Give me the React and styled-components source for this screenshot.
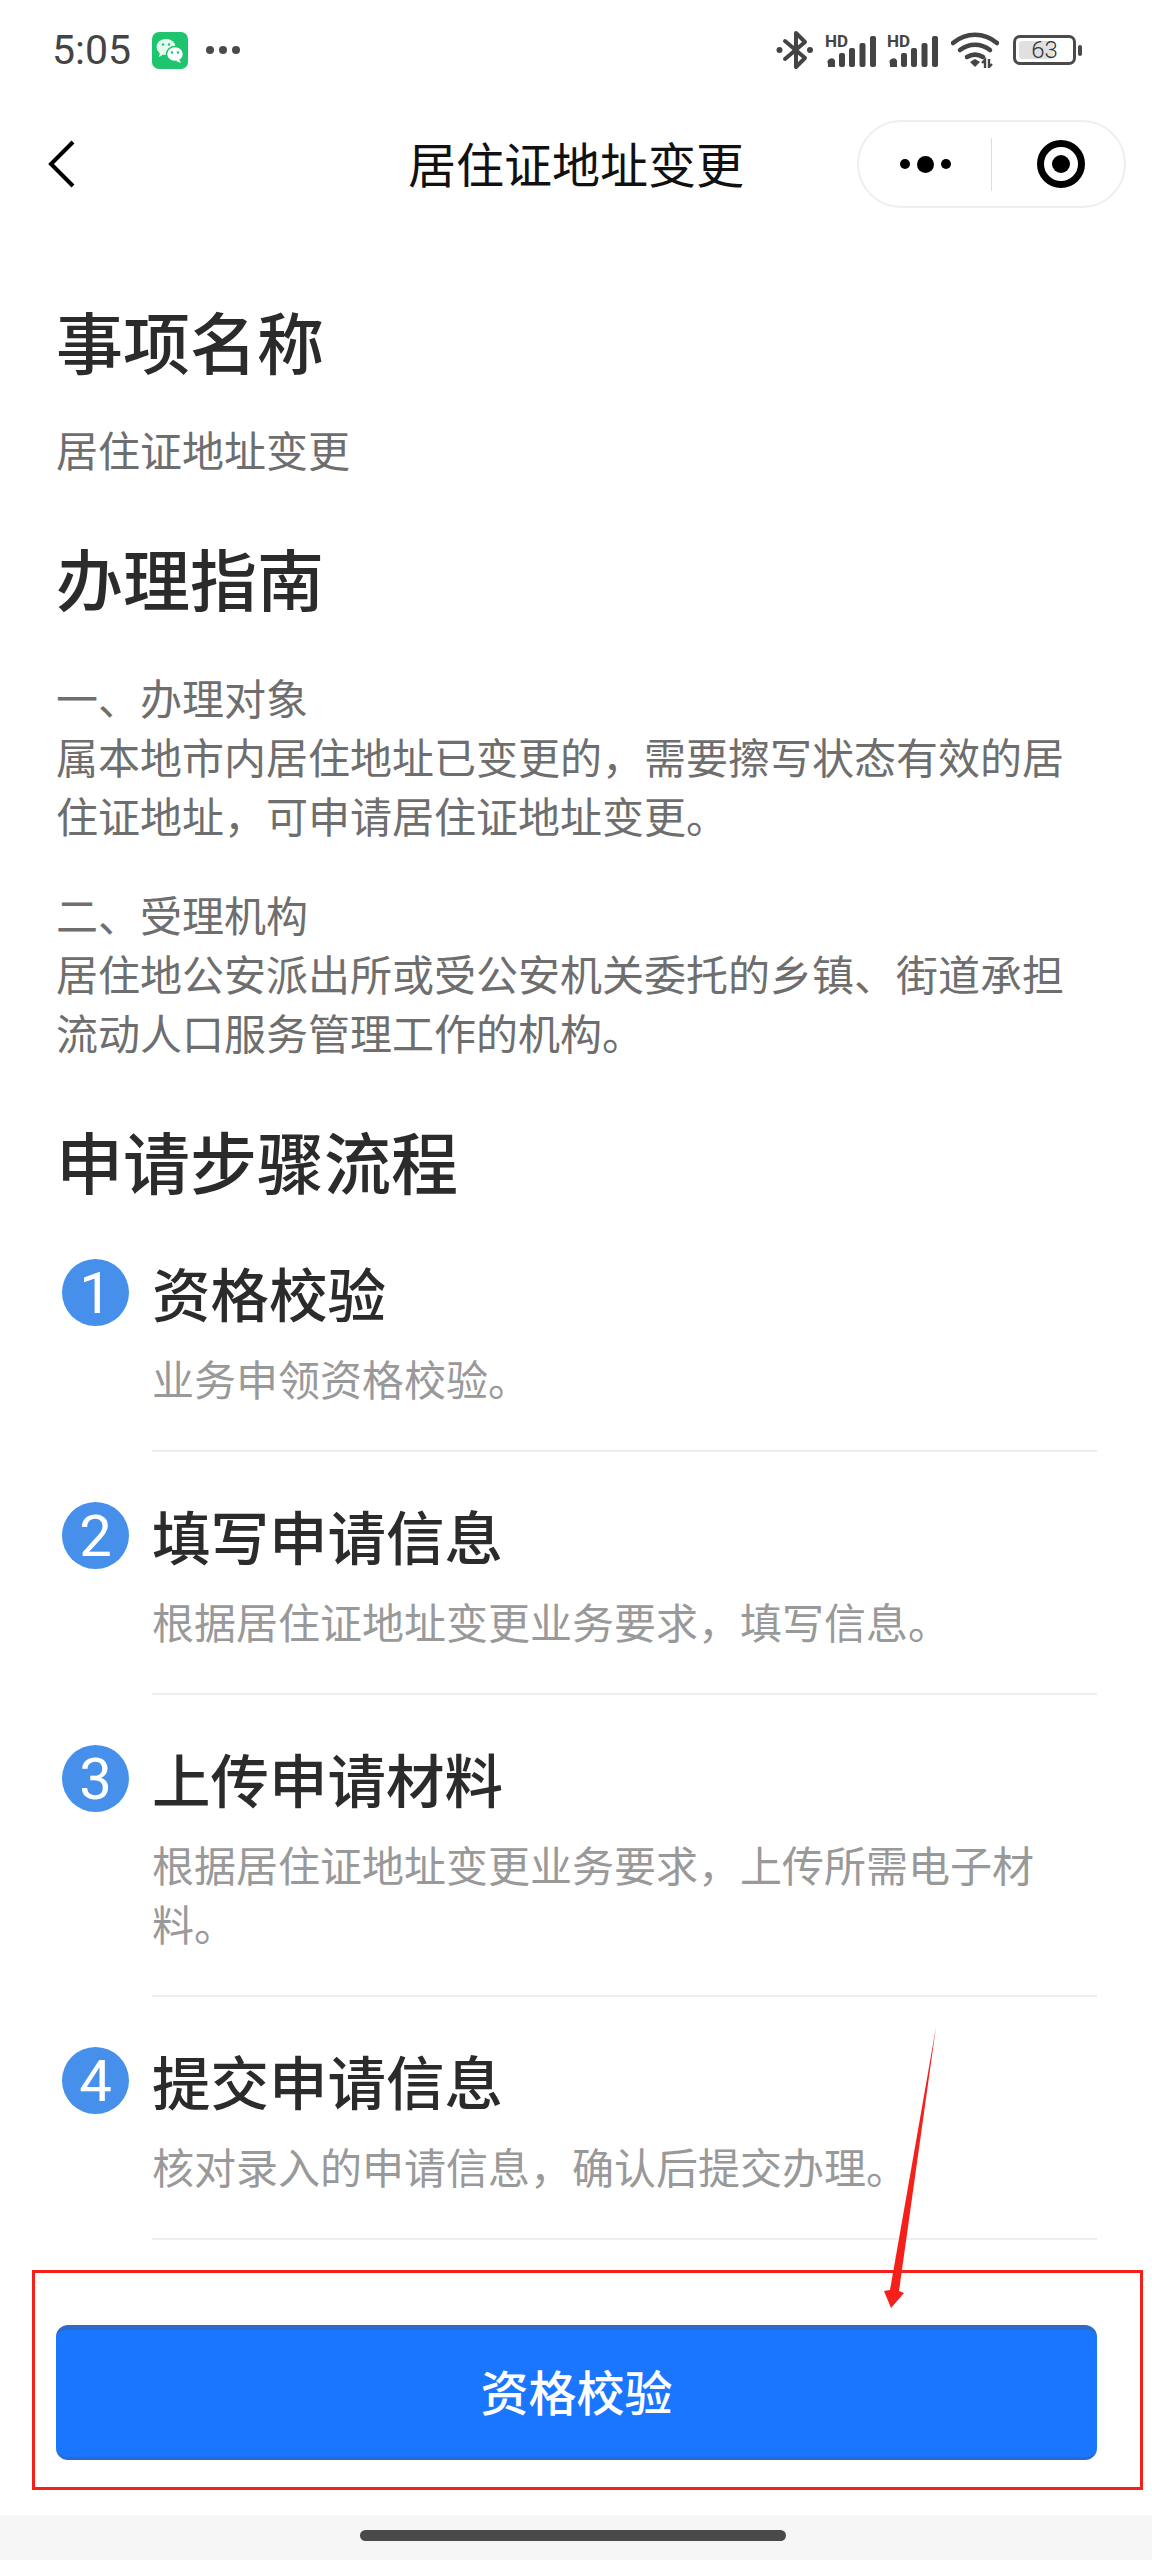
import styled, { createGlobalStyle } from 'styled-components'

const GlobalStyle = createGlobalStyle`
  html, body {
    margin: 0;
    padding: 0;
    background: #fff;
  }
  body {
    font-family: 'Noto Sans CJK SC', 'Noto Sans', sans-serif;
  }
`

const steps = [
  { title: '资格校验', desc: '业务申领资格校验。' },
  { title: '填写申请信息', desc: '根据居住证地址变更业务要求\uFF0C填写信息。' },
  { title: '上传申请材料', desc: '根据居住证地址变更业务要求\uFF0C上传所需电子材料。' },
  { title: '提交申请信息', desc: '核对录入的申请信息\uFF0C确认后提交办理。' },
]

const WeChatIcon = () => (
  <svg width='36' height='37' viewBox='0 0 36 37'>
    <rect width='36' height='37' rx='7' fill='#1fc46f' />
    <ellipse cx='14' cy='15' rx='9.5' ry='8' fill='#e6f9ee' />
    <path d='M8 20l-1 5 5-3z' fill='#e6f9ee' />
    <ellipse cx='23' cy='22' rx='8.5' ry='7.5' fill='#fff' stroke='#1fc46f' strokeWidth='1.5' />
    <path d='M27 27l2 4-5-2z' fill='#fff' />
    <circle cx='11' cy='12.5' r='1.2' fill='#1fc46f' />
    <circle cx='17' cy='12.5' r='1.2' fill='#1fc46f' />
    <circle cx='20' cy='20.5' r='1.2' fill='#1fc46f' />
    <circle cx='26' cy='20.5' r='1.2' fill='#1fc46f' />
  </svg>
)

const BluetoothIcon = () => (
  <svg width='38' height='40' viewBox='0 0 38 40'>
    <path
      d='M9 11l20 17-9 9V3l9 9L9 29'
      fill='none'
      stroke='#444'
      strokeWidth='4'
      strokeLinejoin='round'
      strokeLinecap='round'
    />
    <circle cx='3.5' cy='20' r='3' fill='#444' />
    <circle cx='34' cy='20' r='3' fill='#444' />
  </svg>
)

const SignalIcon = () => (
  <svg width='51' height='44' viewBox='0 0 51 44'>
    <text x='0' y='19' fontFamily='Roboto, sans-serif' fontWeight='700' fontSize='17' fill='#444'>
      HD
    </text>
    <path d='M3 36a3.5 3.5 0 0 1 7-3.5V39H3z' fill='#444' />
    <rect x='14' y='25' width='6' height='14' rx='2' fill='#444' />
    <rect x='24' y='20' width='6' height='19' rx='2' fill='#444' />
    <rect x='34.5' y='15' width='6' height='24' rx='2' fill='#444' />
    <rect x='45' y='8' width='6' height='31' rx='2' fill='#444' />
  </svg>
)

const WifiIcon = () => (
  <svg width='48' height='36' viewBox='0 0 48 36'>
    <g fill='none' stroke='#444' strokeWidth='4.5' strokeLinecap='round'>
      <path d='M2 11c13-11 31-11 44 0' />
      <path d='M9 18c9-7 21-7 30 0' />
      <path d='M16 25c5-3 11-3 16 0' />
    </g>
    <path d='M19 30l5-3 5 3-5 5z' fill='#444' />
    <path d='M34 36v-8l-3 3M38 27v8l3-3' fill='none' stroke='#444' strokeWidth='2.4' />
  </svg>
)

const App = () => {
  return (
    <Page>
      <GlobalStyle />
      <StatusBar>
        <StatusLeft>
          <Time>5:05</Time>
          <WeChatIcon />
          <StatusDots>
            <i />
            <i />
            <i />
          </StatusDots>
        </StatusLeft>
        <StatusRight>
          <BluetoothIcon />
          <SignalIcon />
          <SignalIcon />
          <WifiWrap>
            <WifiIcon />
          </WifiWrap>
          <Battery>
            <BatteryBody>
              <BatteryFill />
              <BatteryText>63</BatteryText>
            </BatteryBody>
            <BatteryCap />
          </Battery>
        </StatusRight>
      </StatusBar>

      <NavBar>
        <BackButton>
          <svg width='28' height='48' viewBox='0 0 28 48'>
            <path d='M25 2L3 24l22 22' fill='none' stroke='#000' strokeWidth='4' />
          </svg>
        </BackButton>
        <NavTitle>居住证地址变更</NavTitle>
        <Capsule>
          <MoreDots>
            <MoreDot />
            <MoreDot $big />
            <MoreDot />
          </MoreDots>
          <CapsuleDivider />
          <CloseRing />
        </Capsule>
      </NavBar>

      <Content>
        <Heading $top={67}>事项名称</Heading>
        <Paragraph $top={34}>居住证地址变更</Paragraph>
        <Heading $top={54}>办理指南</Heading>
        <Paragraph $top={45}>
          一、办理对象
          <br />
          {'属本地市内居住地址已变更的\uFF0C需要擦写状态有效的居住证地址\uFF0C可申请居住证地址变更。'}
        </Paragraph>
        <Paragraph $top={40}>
          二、受理机构
          <br />
          居住地公安派出所或受公安机关委托的乡镇、街道承担流动人口服务管理工作的机构。
        </Paragraph>
        <Heading $top={54}>申请步骤流程</Heading>
        <StepList>
          {steps.map((step, index) => (
            <Step key={index}>
              <StepBadge>{index + 1}</StepBadge>
              <StepBody>
                <StepTitle>{step.title}</StepTitle>
                <StepDesc>{step.desc}</StepDesc>
              </StepBody>
            </Step>
          ))}
        </StepList>
      </Content>

      <Footer>
        <PrimaryButton>资格校验</PrimaryButton>
      </Footer>

      <HomeBar>
        <HomeIndicator />
      </HomeBar>

      <RedBox />
      <RedArrow viewBox='0 0 70 285' width='70' height='285'>
        <path d='M66 0L29 264l5 2-13 15-7-17 6-1z' fill='#f5201a' />
      </RedArrow>
    </Page>
  )
}
export default App

const Page = styled.div`
  position: relative;
  width: 1152px;
  height: 2560px;
  display: flex;
  flex-direction: column;
  overflow: hidden;
  background: #fff;
`

const StatusBar = styled.div`
  height: 100px;
  flex-shrink: 0;
  display: flex;
  align-items: center;
  justify-content: space-between;
  padding: 0 70px 0 52px;
  box-sizing: border-box;
`

const StatusLeft = styled.div`
  display: flex;
  align-items: center;
  gap: 21px;
`

const Time = styled.span`
  font-family: Roboto, sans-serif;
  font-size: 41px;
  line-height: 48px;
  color: #444;
`

const StatusDots = styled.div`
  display: flex;
  gap: 5px;
  margin-left: -3px;

  i {
    width: 8px;
    height: 8px;
    border-radius: 50%;
    background: #4a4a4a;
  }
`

const StatusRight = styled.div`
  display: flex;
  align-items: center;
  gap: 11px;
`

const WifiWrap = styled.div`
  display: flex;
  margin-left: 2px;
`

const Battery = styled.div`
  display: flex;
  align-items: center;
  gap: 2px;
  margin-left: 3px;
`

const BatteryBody = styled.div`
  position: relative;
  width: 63px;
  height: 30px;
  box-sizing: border-box;
  border: 3px solid #4a4a4a;
  border-radius: 7px;
  display: flex;
  align-items: center;
  justify-content: center;
`

const BatteryFill = styled.div`
  position: absolute;
  left: 3px;
  top: 3px;
  bottom: 3px;
  width: 34px;
  background: #e0e0e0;
  border-radius: 3px;
`

const BatteryText = styled.span`
  position: relative;
  font-family: Roboto, sans-serif;
  font-size: 24px;
  font-weight: 300;
  color: #333;
  line-height: 24px;
`

const BatteryCap = styled.div`
  width: 4px;
  height: 11px;
  border-radius: 2px;
  background: #4a4a4a;
`

const NavBar = styled.div`
  position: relative;
  height: 128px;
  flex-shrink: 0;
  display: flex;
  align-items: center;
  justify-content: space-between;
  padding: 0 26px 0 48px;
  box-sizing: border-box;
`

const BackButton = styled.div`
  display: flex;
  align-items: center;
`

const NavTitle = styled.div`
  position: absolute;
  left: 0;
  right: 0;
  top: 30px;
  text-align: center;
  font-size: 48px;
  line-height: 64px;
  color: #111;
`

const Capsule = styled.div`
  width: 269px;
  height: 88px;
  box-sizing: border-box;
  border: 2px solid #eee;
  border-radius: 44px;
  display: flex;
  align-items: center;
`

const MoreDots = styled.div`
  width: 132px;
  display: flex;
  align-items: center;
  justify-content: center;
  gap: 7px;
`

const MoreDot = styled.div`
  width: ${({ $big }) => ($big ? 17 : 10)}px;
  height: ${({ $big }) => ($big ? 17 : 10)}px;
  border-radius: 50%;
  background: #000;
`

const CapsuleDivider = styled.div`
  width: 1px;
  height: 53px;
  background: #ddd;
`

const CloseRing = styled.div`
  width: 48px;
  height: 48px;
  margin-left: 45px;
  box-sizing: border-box;
  border: 7px solid #000;
  border-radius: 50%;
  display: flex;
  align-items: center;
  justify-content: center;

  &::after {
    content: '';
    width: 18px;
    height: 18px;
    border-radius: 50%;
    background: #000;
  }
`

const Content = styled.div`
  padding: 0 55px 0 56px;
  flex: 1;
`

const Heading = styled.h2`
  margin: ${({ $top }) => $top}px 0 0;
  font-size: 67px;
  line-height: 90px;
  font-weight: 500;
  color: #2b2b2b;
`

const Paragraph = styled.p`
  margin: ${({ $top }) => $top}px 0 0;
  font-size: 42px;
  line-height: 59px;
  font-weight: 400;
  color: #6e6e6e;
`

const StepList = styled.div`
  padding-top: 4px;
`

const Step = styled.div`
  display: flex;
  align-items: flex-start;
`

const StepBadge = styled.div`
  flex-shrink: 0;
  width: 67px;
  height: 67px;
  margin: 50px 23px 0 6px;
  border-radius: 50%;
  background: #4690ec;
  color: #fff;
  font-family: Roboto, sans-serif;
  font-size: 58px;
  font-weight: 400;
  display: flex;
  align-items: center;
  justify-content: center;
`

const StepBody = styled.div`
  flex: 1;
  padding: 43px 0;
  border-bottom: 2px solid #eee;
`

const StepTitle = styled.div`
  font-size: 58.5px;
  line-height: 80px;
  font-weight: 500;
  color: #2b2b2b;
`

const StepDesc = styled.div`
  margin-top: 16px;
  font-size: 42px;
  line-height: 59px;
  color: #999;
`

const Footer = styled.div`
  flex-shrink: 0;
  padding: 0 55px 55px 56px;
`

const PrimaryButton = styled.div`
  height: 135px;
  box-sizing: border-box;
  border-top: 5px solid #2a6cc8;
  border-bottom: 3px solid #2a6cc8;
  border-radius: 12px;
  background: #1a76ff;
  color: #fff;
  font-size: 48px;
  font-weight: 500;
  padding-bottom: 8px;
  display: flex;
  align-items: center;
  justify-content: center;
`

const HomeBar = styled.div`
  height: 45px;
  flex-shrink: 0;
  background: #f6f6f6;
  display: flex;
  justify-content: center;
  padding: 15px 6px 0 0;
  box-sizing: border-box;
`

const HomeIndicator = styled.div`
  width: 426px;
  height: 11px;
  border-radius: 6px;
  background: #4a4a4a;
`

const RedBox = styled.div`
  position: absolute;
  left: 32px;
  top: 2270px;
  width: 1111px;
  height: 220px;
  box-sizing: border-box;
  border: 3px solid #f5201a;
`

const RedArrow = styled.svg`
  position: absolute;
  left: 870px;
  top: 2027px;
`
